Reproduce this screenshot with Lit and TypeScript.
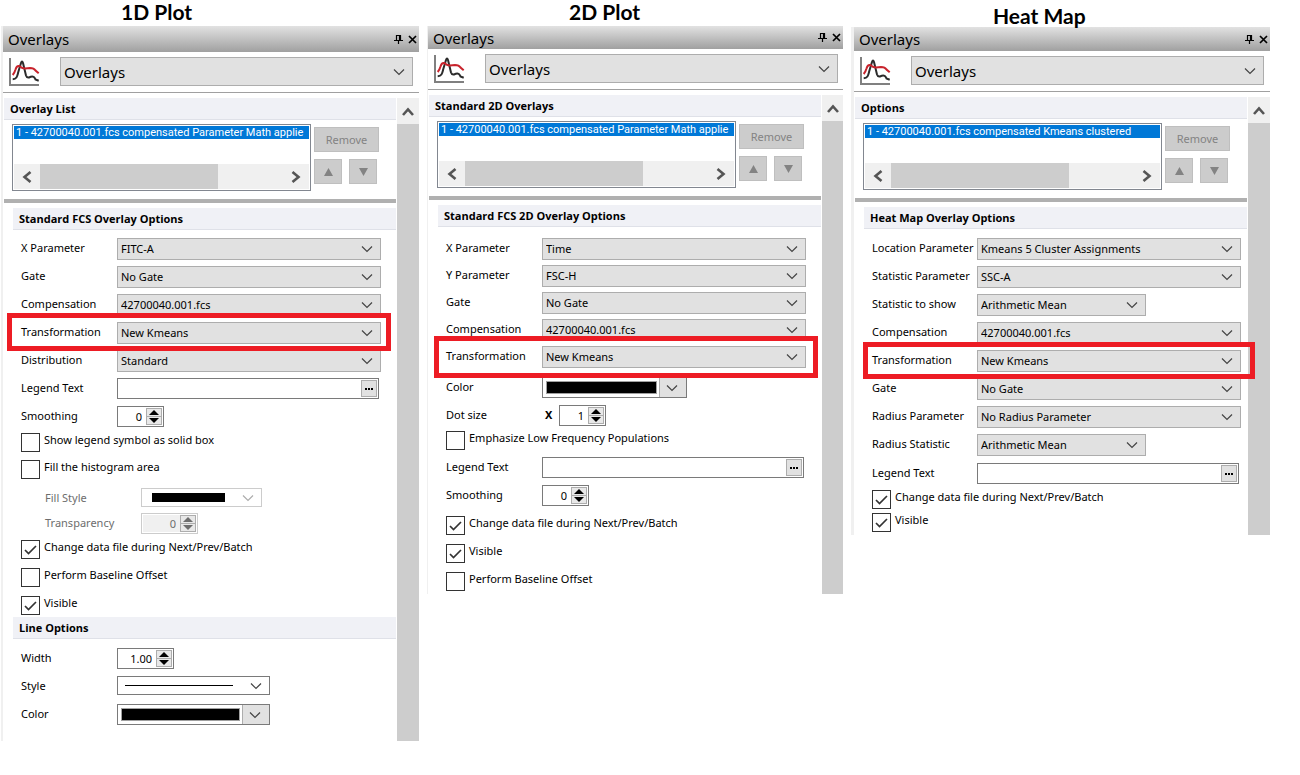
import { LitElement, html, css, svg, nothing } from "lit";
import { customElement, property } from "lit/decorators.js";
import { classMap } from "lit/directives/class-map.js";

type Kind = "select" | "text" | "spin" | "check" | "fill" | "line" | "color";

interface Field {
  kind: Kind;
  label: string;
  value?: string;
  checked?: boolean;
  disabled?: boolean;
  narrow?: boolean;
  marked?: boolean;
  prefix?: string;
  row?: number;
}

interface Group {
  title: string;
  fields: Field[];
}

interface Panel {
  id: string;
  caption: string;
  listTitle: string;
  item: string;
  groups: Group[];
}

const PANELS: Panel[] = [
  {
    id: "one",
    caption: "1D Plot",
    listTitle: "Overlay List",
    item: "1 - 42700040.001.fcs compensated Parameter Math applie",
    groups: [
      {
        title: "Standard FCS Overlay Options",
        fields: [
          { kind: "select", label: "X Parameter", value: "FITC-A" },
          { kind: "select", label: "Gate", value: "No Gate" },
          { kind: "select", label: "Compensation", value: "42700040.001.fcs" },
          { kind: "select", label: "Transformation", value: "New Kmeans", marked: true },
          { kind: "select", label: "Distribution", value: "Standard" },
          { kind: "text", label: "Legend Text" },
          { kind: "spin", label: "Smoothing", value: "0", row: 27 },
          { kind: "check", label: "Show legend symbol as solid box", row: 27 },
          { kind: "check", label: "Fill the histogram area" },
          { kind: "fill", label: "Fill Style", disabled: true, row: 25 },
          { kind: "spin", label: "Transparency", value: "0", disabled: true, row: 27 },
          { kind: "check", label: "Change data file during Next/Prev/Batch", checked: true },
          { kind: "check", label: "Perform Baseline Offset" },
          { kind: "check", label: "Visible", checked: true, row: 21 },
        ],
      },
      {
        title: "Line Options",
        fields: [
          { kind: "spin", label: "Width", value: "1.00" },
          { kind: "line", label: "Style" },
          { kind: "color", label: "Color" },
        ],
      },
    ],
  },
  {
    id: "two",
    caption: "2D Plot",
    listTitle: "Standard 2D Overlays",
    item: "1 - 42700040.001.fcs compensated Parameter Math applie",
    groups: [
      {
        title: "Standard FCS 2D Overlay Options",
        fields: [
          { kind: "select", label: "X Parameter", value: "Time", row: 27 },
          { kind: "select", label: "Y Parameter", value: "FSC-H", row: 27 },
          { kind: "select", label: "Gate", value: "No Gate", row: 27 },
          { kind: "select", label: "Compensation", value: "42700040.001.fcs", row: 27 },
          { kind: "select", label: "Transformation", value: "New Kmeans", marked: true, row: 31 },
          { kind: "color", label: "Color", narrow: true },
          { kind: "spin", label: "Dot size", value: "1", prefix: "X", row: 26 },
          { kind: "check", label: "Emphasize Low Frequency Populations", row: 26 },
          { kind: "text", label: "Legend Text" },
          { kind: "spin", label: "Smoothing", value: "0", row: 31 },
          { kind: "check", label: "Change data file during Next/Prev/Batch", checked: true },
          { kind: "check", label: "Visible", checked: true },
          { kind: "check", label: "Perform Baseline Offset", row: 22 },
        ],
      },
    ],
  },
  {
    id: "three",
    caption: "Heat Map",
    listTitle: "Options",
    item: "1 - 42700040.001.fcs compensated Kmeans clustered",
    groups: [
      {
        title: "Heat Map Overlay Options",
        fields: [
          { kind: "select", label: "Location Parameter", value: "Kmeans 5 Cluster Assignments" },
          { kind: "select", label: "Statistic Parameter", value: "SSC-A" },
          { kind: "select", label: "Statistic to show", value: "Arithmetic Mean", narrow: true },
          { kind: "select", label: "Compensation", value: "42700040.001.fcs" },
          { kind: "select", label: "Transformation", value: "New Kmeans", marked: true },
          { kind: "select", label: "Gate", value: "No Gate" },
          { kind: "select", label: "Radius Parameter", value: "No Radius Parameter" },
          { kind: "select", label: "Radius Statistic", value: "Arithmetic Mean", narrow: true, row: 29 },
          { kind: "text", label: "Legend Text", row: 27 },
          { kind: "check", label: "Change data file during Next/Prev/Batch", checked: true, row: 23 },
          { kind: "check", label: "Visible", checked: true, row: 22 },
        ],
      },
    ],
  },
];

const icon = (w: number, h: number, cls: string, body: unknown) =>
  html`<svg class=${cls} width=${w} height=${h} viewBox="0 0 ${w} ${h}" aria-hidden="true">${body}</svg>`;

const chevron = () =>
  icon(12, 8, "chevron", svg`<path d="M1 1.5 6 6.5 11 1.5" fill="none" stroke="currentColor" stroke-width="1.2"/>`);

@customElement("overlay-panel")
export class OverlayPanel extends LitElement {
  @property({ attribute: false }) panel!: Panel;

  static styles = css`
    :host {
      display: block;
      min-width: 0;
      color: #000;
      font: 11px/20px "Noto Sans", "Open Sans", sans-serif;
    }
    * { box-sizing: border-box; }
    button, input, select {
      margin: 0;
      padding: 0;
      font: inherit;
      color: inherit;
      border-radius: 0;
      appearance: none;
      -webkit-appearance: none;
      outline-offset: -2px;
    }
    button { display: grid; place-items: center; }
    h2, h3 { margin: 0; }
    svg { display: block; pointer-events: none; }

    .caption {
      height: 26px;
      padding: 0 0 0 120px;
      font: 700 21px/24px Lato, "Open Sans", sans-serif;
      white-space: nowrap;
    }
    .two .caption { padding-left: 142px; }
    .three .caption { height: 27px; padding: 4px 0 0 142px; }

    .window { border-left: 2px solid #f0f0f0; }
    .two .window { border-left-width: 1px; }
    .three .window { border-left-width: 3px; }

    .titlebar {
      display: flex;
      align-items: center;
      height: 26px;
      padding-left: 5px;
      background: linear-gradient(#e2e2e2, #a0a0a0);
      font-size: 15px;
    }
    .two .titlebar { height: 23px; }
    .three .titlebar { height: 24px; }
    .titlebar h2 { flex: 1; font: inherit; }
    .tool { width: 14px; height: 16px; border: 0; background: none; }

    .toolbar {
      display: grid;
      grid-template-columns: 51px minmax(0, 1fr);
      padding: 5px 6px 6px;
      border-bottom: 1px solid #a0a0a0;
      font-size: 15px;
    }
    .two .toolbar { padding-right: 5px; }
    .plot { margin-top: 1px; }
    .big { height: 29px; }

    .combo { display: grid; align-items: center; }
    .combo > * { grid-area: 1 / 1; }
    .combo select, .combo .face {
      width: 100%;
      height: 100%;
      padding-left: 3px;
      border: 1px solid #adadad;
      background: #e1e1e1;
    }
    .chevron { justify-self: end; margin-right: 8px; color: #444; }

    .content { display: grid; grid-template-columns: minmax(0, 1fr) 22px; padding: 5px 0 0 1px; }
    .two .content { grid-template-columns: minmax(0, 1fr) 21px; }
    .main { padding-right: 1px; }
    .vbar { background: #cdcdcd; }
    .vbar button { width: 100%; height: 26px; border: 0; background: #f0f0f0; }

    .section {
      height: 22px;
      padding-left: 6px;
      border-bottom: 1px solid #dfe1e8;
      background: #f0f1f6;
      font: 700 11px/21px "Open Sans", "Noto Sans", sans-serif;
      white-space: nowrap;
    }
    .list {
      display: grid;
      grid-template-columns: minmax(0, 1fr) 65px;
      gap: 3px;
      padding: 4px 17px 8px 8px;
      border-bottom: 4px solid #b0b0b0;
    }
    .box {
      display: flex;
      flex-direction: column;
      justify-content: space-between;
      height: 67px;
      padding: 1px;
      border: 1px solid #828790;
    }
    .item {
      height: 13px;
      padding-left: 2px;
      overflow: hidden;
      background: #0078d7;
      color: #fff;
      font-family: Roboto, "Noto Sans", sans-serif;
      line-height: 13px;
      white-space: nowrap;
    }
    .hbar { display: grid; grid-template-columns: 26px 178fr 65fr 26px; height: 25px; background: #f0f0f0; }
    .hbar button { border: 0; background: none; }
    .thumb { background: #cdcdcd; }
    .hbar .next { grid-column: 4; }
    .actions { display: grid; grid-template-columns: 28px 28px; gap: 7px; align-content: start; padding-top: 3px; }
    .actions button { height: 25px; border: 1px solid #bfbfbf; background: #ccc; color: #838383; }
    .actions .remove { grid-column: 1 / -1; width: 65px; }

    .group { padding: 0 0 0 9px; }
    .options { padding-top: 5px; }
    .fields { padding: 8px 15px 0 8px; }
    .two .fields { padding-top: 11px; }
    .three .fields { padding: 9px 6px 0 8px; }
    .line-options .fields { padding-top: 9px; padding-bottom: 9px; }

    .row { display: grid; grid-template-columns: 96px minmax(0, 1fr); align-items: start; height: 28px; position: relative; }
    .three .row { grid-template-columns: 105px minmax(0, 1fr); }
    .h21 { height: 21px; }
    .h22 { height: 22px; }
    .h23 { height: 23px; }
    .h25 { height: 25px; }
    .h26 { height: 26px; }
    .h27 { height: 27px; }
    .h29 { height: 29px; }
    .h31 { height: 31px; }
    .row label { white-space: nowrap; }
    .row.sub { padding-left: 24px; }
    .row.disabled { color: #6d6d6d; }
    .row .combo { height: 21px; }
    .row .combo.short { width: 169px; }

    /* Callout frame drawn over the highlighted row and its neighbours. */
    .mark {
      position: absolute;
      z-index: 1;
      inset: -9px -10px -1px -14px;
      border: 5px solid #ed1c24;
      pointer-events: none;
    }
    .two .mark { inset: -10px -12px -1px -12px; }
    .three .mark { inset: -8px -14px -1px -9px; }

    .text, .spin {
      display: grid;
      grid-template-columns: minmax(0, 1fr) 16px;
      grid-template-rows: 17px;
      height: 21px;
      padding: 1px;
      border: 1px solid #7a7a7a;
    }
    .text { margin-right: 2px; }
    .text input { width: 100%; height: 17px; border: 0; background: none; }
    .text button { border: 1px solid #adadad; background: #e1e1e1; }

    .spin-line { display: flex; }
    .prefix { width: 17px; padding-left: 3px; font-weight: 700; }
    .spin { width: 47px; }
    .spin.wide { width: 57px; }
    .spin input { width: 100%; height: 17px; padding-right: 4px; border: 0; background: none; text-align: right; -moz-appearance: textfield; }
    .spin input::-webkit-inner-spin-button { appearance: none; -webkit-appearance: none; margin: 0; }
    .steps { display: grid; grid-template-rows: 7px 8px; border: 1px solid #adadad; background: #e8e8e8; }
    .steps button { border: 0; background: none; }
    .steps button + button { border-top: 1px solid #adadad; }
    .disabled .spin { border-color: #ccc; }
    .disabled .spin input { background: #f0f0f0; }

    .row.check { grid-template-columns: 19px minmax(0, 1fr); column-gap: 4px; }
    .tick { display: grid; place-items: center; width: 19px; height: 19px; }
    .tick > * { grid-area: 1 / 1; }
    .tick input { width: 19px; height: 19px; border: 1px solid #333; background: #fff; }
    .tick svg { visibility: hidden; z-index: 1; }
    .tick input:checked + svg { visibility: visible; }
    .check label { line-height: 13px; }

    .row .pick { height: 19px; width: 153px; }
    .row .fill { width: 121px; }
    .pick .face { display: flex; justify-content: flex-start; align-items: center; padding-left: 7px; border-color: #7a7a7a; background: #fff; }
    .fill .face { padding-left: 10px; border-color: #ccc; }
    .fill .chevron { color: #adadad; }
    .swatch { width: 73px; height: 9px; background: #000; }
    .stroke { width: 108px; height: 1px; background: #000; }

    .color { display: grid; grid-template-columns: minmax(0, 1fr) 27px; width: 153px; height: 21px; padding: 0; border: 1px solid #7a7a7a; background: #fff; place-items: stretch; }
    .color.short { width: 145px; }
    .ink { margin: 3px 2px 3px 3px; border: 1px solid #a0a0a0; background: #000; }
    .drop { display: grid; align-items: center; border-left: 1px solid #adadad; background: #e1e1e1; }
  `;

  private control(f: Field, id: string) {
    switch (f.kind) {
      case "select":
        return html`<div class=${classMap({ combo: true, short: !!f.narrow })}>
          <select id=${id}><option>${f.value}</option></select>${chevron()}
        </div>`;
      case "text":
        return html`<div class="text">
          <input id=${id} type="text" />
          <button type="button">
            ${icon(8, 2, "", svg`<path d="M0 0h2v2H0zM3 0h2v2H3zM6 0h2v2H6z" fill="#000"/>`)}
          </button>
        </div>`;
      case "spin":
        return html`<div class="spin-line">
          ${f.prefix ? html`<span class="prefix">${f.prefix}</span>` : nothing}
          <div class=${classMap({ spin: true, wide: !!f.disabled || f.value === "1.00" })}>
            <input id=${id} type="number" step="any" .value=${f.value ?? ""} ?disabled=${f.disabled} />
            <div class="steps">
              <button type="button" tabindex="-1" ?disabled=${f.disabled}>
                ${icon(10, 5, "", svg`<path d="M0 5 5 0 10 5z" fill="currentColor"/>`)}
              </button>
              <button type="button" tabindex="-1" ?disabled=${f.disabled}>
                ${icon(10, 5, "", svg`<path d="M0 0 5 5 10 0z" fill="currentColor"/>`)}
              </button>
            </div>
          </div>
        </div>`;
      case "fill":
        return html`<div class="combo pick fill">
          <button class="face" id=${id} type="button" ?disabled=${f.disabled}><span class="swatch"></span></button>${chevron()}
        </div>`;
      case "line":
        return html`<div class="combo pick">
          <button class="face" id=${id} type="button"><span class="stroke"></span></button>${chevron()}
        </div>`;
      case "color":
        return html`<button id=${id} type="button" class=${classMap({ color: true, short: !!f.narrow })}>
          <span class="ink"></span><span class="drop">${chevron()}</span>
        </button>`;
      default:
        return nothing;
    }
  }

  private row(f: Field, id: string) {
    const height = f.row ? ` h${f.row}` : "";
    if (f.kind === "check") {
      return html`<div class="row check${height}">
        <span class="tick">
          <input type="checkbox" id=${id} ?checked=${f.checked} />
          ${icon(13, 10, "", svg`<path d="M1 5 4.5 8.5 12 1" fill="none" stroke="#333" stroke-width="1.7"/>`)}
        </span>
        <label for=${id}>${f.label}</label>
      </div>`;
    }
    return html`<div class="row${height}${f.disabled ? " sub disabled" : ""}">
      <label for=${id}>${f.label}</label>
      ${this.control(f, id)}
      ${f.marked ? html`<span class="mark"></span>` : nothing}
    </div>`;
  }

  render() {
    const p = this.panel;
    return html`<section class=${p.id}>
      <h2 class="caption">${p.caption}</h2>
      <div class="window">
        <header class="titlebar">
          <h2>Overlays</h2>
          <button class="tool" type="button">
            ${icon(9, 9, "", svg`<path d="M2.5 5V.5h4V5M5.5 0v5M0 5.5h9M4.5 6v3" fill="none" stroke="#000" stroke-width="1.2"/>`)}
          </button>
          <button class="tool" type="button">
            ${icon(9, 9, "", svg`<path d="M1 1 8 8M8 1 1 8" fill="none" stroke="#000" stroke-width="1.7"/>`)}
          </button>
        </header>
        <div class="toolbar">
          ${icon(
            31,
            28,
            "plot",
            svg`<path d="M1 0V27H30" fill="none" stroke="#808080" stroke-width="2"/>
              <path d="M3.7 21.3C8 21 8.2 18 9.3 14L12 5Q13 2 14 5L17 17.5Q17.8 20 20 19.5 23 18 24.5 18.8 26 20 26.5 21.5L29.7 22.7" fill="none" stroke="#2b2b2b" stroke-width="2"/>
              <path d="M3.7 17Q5.5 15 6.5 11.5 7.5 7.5 10.3 8 13 10.5 16 10.5L21 10Q25 10 26.5 12.5L29.7 15.3" fill="none" stroke="#c8232c" stroke-width="2"/>`
          )}
          <div class="combo big">
            <select aria-label="Overlays"><option>Overlays</option></select>${chevron()}
          </div>
        </div>
        <div class="content">
          <div class="main">
            <h3 class="section">${p.listTitle}</h3>
            <div class="list">
              <div class="box">
                <div role="listbox"><div class="item" role="option" aria-selected="true">${p.item}</div></div>
                <div class="hbar">
                  <button type="button">
                    ${icon(10, 12, "", svg`<path d="M8.5 1 2.5 6 8.5 11" fill="none" stroke="#555" stroke-width="2.6"/>`)}
                  </button>
                  <span class="thumb"></span>
                  <button class="next" type="button">
                    ${icon(10, 12, "", svg`<path d="M1.5 1 7.5 6 1.5 11" fill="none" stroke="#555" stroke-width="2.6"/>`)}
                  </button>
                </div>
              </div>
              <div class="actions">
                <button class="remove" type="button" disabled>Remove</button>
                <button type="button" disabled>
                  ${icon(9, 8, "", svg`<path d="M0 8 4.5 0 9 8z" fill="#838383"/>`)}
                </button>
                <button type="button" disabled>
                  ${icon(9, 8, "", svg`<path d="M0 0 4.5 8 9 0z" fill="#838383"/>`)}
                </button>
              </div>
            </div>
            ${p.groups.map(
              (g, gi) => html`<div class="group ${gi === 0 ? "options" : "line-options"}">
                <h3 class="section">${g.title}</h3>
                <div class="fields">${g.fields.map((f, fi) => this.row(f, `f${gi}-${fi}`))}</div>
              </div>`
            )}
          </div>
          <div class="vbar">
            <button type="button">
              ${icon(12, 9, "", svg`<path d="M1 8 6 2.5 11 8" fill="none" stroke="#555" stroke-width="2.6"/>`)}
            </button>
          </div>
        </div>
      </div>
    </section>`;
  }
}

@customElement("app-root")
export class AppRoot extends LitElement {
  static styles = css`
    :host {
      display: grid;
      grid-template-columns: 418fr 416fr 419fr;
      gap: 8px;
      align-items: start;
      min-height: 100vh;
      box-sizing: border-box;
      padding: 0 30px 0 1px;
      background: #fff;
    }
  `;

  render() {
    return PANELS.map((p) => html`<overlay-panel .panel=${p}></overlay-panel>`);
  }
}
